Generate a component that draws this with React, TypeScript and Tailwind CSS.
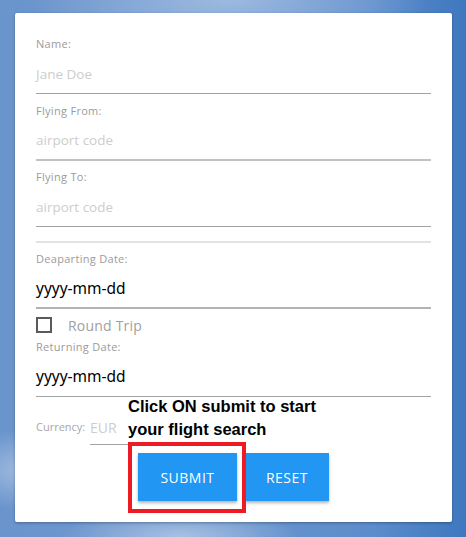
import React from 'react';

const labelCls = "h-4 text-[11px] leading-4 tracking-[0.3px] text-[#9b9b9b] [font-family:'Open_Sans',sans-serif]";
const placeholderCls = "text-[13.5px] text-[#cdcdcd] [font-family:'Open_Sans',sans-serif]";
const dateCls = "text-[15.5px] text-black [font-family:'Noto_Sans',sans-serif]";

const Field: React.FC<{ label: string; line: string; top: string; children: React.ReactNode }> = ({ label, line, top, children }) => {
  return (
    <div className={top}>
      <div className={labelCls}>{label}</div>
      <div className={`h-[42px] flex items-center pt-[3px] ${line}`}>{children}</div>
    </div>
  );
};

const App: React.FC = () => {
  return (
    <div className="w-[466px] h-[537px] overflow-hidden pt-[13px] pl-[15px] bg-[radial-gradient(ellipse_60px_40px_at_20px_470px,rgba(255,255,255,0.35),transparent),radial-gradient(ellipse_120px_30px_at_180px_537px,rgba(255,255,255,0.4),transparent),radial-gradient(ellipse_200px_60px_at_230px_0px,rgba(190,210,235,0.6),transparent),linear-gradient(90deg,#6a94cc_0%,#6f98cf_40%,#5c8ccb_80%,#3f78bf_100%)]">
      <div className="relative w-[437px] h-[509px] bg-white rounded-[2px] shadow-[0_1px_3px_rgba(0,0,0,0.3)] px-[21px] pt-[23px]">
        <Field label="Name:" top="" line="border-b border-[#a3a3a3]">
          <span className={placeholderCls}>Jane Doe</span>
        </Field>
        <Field label="Flying From:" top="mt-[9px]" line="border-b-2 border-[#c2c2c2]">
          <span className={placeholderCls}>airport code</span>
        </Field>
        <Field label="Flying To:" top="mt-[8px]" line="border-b border-[#a3a3a3]">
          <span className={placeholderCls}>airport code</span>
        </Field>
        <div className="mt-[14px] h-[2px] bg-[#e2e2e2]" />
        <Field label="Deaparting Date:" top="mt-[8px]" line="border-b-2 border-[#b3b3b3]">
          <span className={dateCls}>yyyy-mm-dd</span>
        </Field>
        <div className="mt-[8px] h-4 flex items-center">
          <div className="w-4 h-4 border-2 border-[#5a5a5a]" />
          <span className="ml-4 text-[14px] tracking-[0.2px] text-[#a0a0a0] [font-family:'Open_Sans',sans-serif]">Round Trip</span>
        </div>
        <Field label="Returning Date:" top="mt-[6px]" line="border-b border-[#a3a3a3]">
          <span className={dateCls}>yyyy-mm-dd</span>
        </Field>
        <div className="mt-[13px] h-[35px] flex items-center">
          <span className="w-[54px] text-[11px] text-[#a8a8a8] [font-family:'Open_Sans',sans-serif]">Currency:</span>
          <div className="w-[38px] h-full flex items-center border-b border-[#a3a3a3]">
            <span className="text-[14px] text-[#cdcdcd] [font-family:'Open_Sans',sans-serif]">EUR</span>
          </div>
        </div>
        <div className="mt-[8px] flex justify-center gap-2">
          <button className="w-[99px] h-[48px] bg-[#2196f3] text-white text-[14px] tracking-[0.5px] shadow-[0_2px_3px_rgba(0,0,0,0.3)] [font-family:'Open_Sans',sans-serif]">
            SUBMIT
          </button>
          <button className="w-[84px] h-[48px] bg-[#2196f3] text-white text-[14px] tracking-[0.5px] shadow-[0_2px_3px_rgba(0,0,0,0.3)] [font-family:'Open_Sans',sans-serif]">
            RESET
          </button>
        </div>
        <div className="absolute left-[113px] top-[382px] text-[16.5px] leading-[23px] font-bold text-black [font-family:'Liberation_Sans',sans-serif]">
          Click ON submit to start
          <br />
          your flight search
        </div>
        <div className="absolute left-[113px] top-[429px] w-[118px] h-[71px] border-4 border-[#ed1c24]" />
      </div>
    </div>
  );
};

export default App;
